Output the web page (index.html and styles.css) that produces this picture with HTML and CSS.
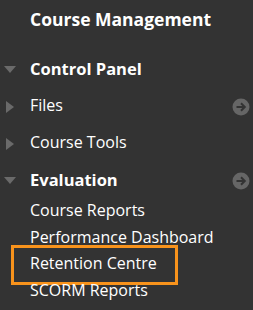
FILE: index.html
```html
<!DOCTYPE html>
<html>
<head>
<meta charset="utf-8">
<link rel="stylesheet" href="styles.css">
</head>
<body>
<nav class="menu">
  <h2 class="title">Course Management</h2>
  <ul class="sections">
    <li class="section open bold">
      <span class="tri down"></span><span class="label">Control Panel</span>
    </li>
    <li class="section">
      <span class="tri right"></span><span class="label">Files</span>
      <span class="go"><svg viewBox="0 0 18 18" width="18" height="18"><circle cx="9" cy="9" r="8.5" fill="#666"/><path d="M4.5 9h8M9 5.2l3.8 3.8-3.8 3.8" fill="none" stroke="#333" stroke-width="2"/></svg></span>
    </li>
    <li class="section">
      <span class="tri right"></span><span class="label">Course Tools</span>
    </li>
    <li class="section open bold">
      <span class="tri down"></span><span class="label">Evaluation</span>
      <span class="go"><svg viewBox="0 0 18 18" width="18" height="18"><circle cx="9" cy="9" r="8.5" fill="#666"/><path d="M4.5 9h8M9 5.2l3.8 3.8-3.8 3.8" fill="none" stroke="#333" stroke-width="2"/></svg></span>
    </li>
  </ul>
  <ul class="subs">
    <li class="sub">Course Reports</li>
    <li class="sub">Performance Dashboard</li>
    <li class="sub highlight">Retention Centre</li>
    <li class="sub">SCORM Reports</li>
  </ul>
</nav>
</body>
</html>
```
FILE: styles.css
```css
html, body {
  margin: 0;
  padding: 0;
  background: #333333;
}
body {
  font-family: "Open Sans", "DejaVu Sans", sans-serif;
  color: #ffffff;
  width: 253px;
  height: 310px;
  overflow: hidden;
}
.menu {
  padding-top: 9px;
}
.title {
  margin: 0 0 20px 30px;
  font-size: 17.5px;
  line-height: 21px;
  font-weight: 700;
}
.sections, .subs {
  list-style: none;
  margin: 0;
  padding: 0;
}
.section {
  display: flex;
  align-items: center;
  height: 37px;
  font-size: 16px;
  line-height: 37px;
  position: relative;
}
.section.bold {
  font-size: 16.5px;
  font-weight: 700;
}
.tri {
  width: 30px;
  height: 37px;
  display: flex;
  align-items: center;
  flex: none;
}
.tri::before {
  content: "";
  display: block;
  width: 0;
  height: 0;
}
.tri.down::before {
  margin-left: 4px;
  margin-top: 2px;
  border-left: 6.5px solid transparent;
  border-right: 6.5px solid transparent;
  border-top: 7px solid #6a6a6a;
}
.tri.right::before {
  margin-left: 6px;
  margin-top: 2px;
  border-top: 6px solid transparent;
  border-bottom: 6px solid transparent;
  border-left: 8px solid #6a6a6a;
}
.label {
  flex: 1;
}
.go {
  display: flex;
  margin-right: 3px;
  margin-top: 3px;
}
.subs {
  margin-top: -1px;
}
.sub {
  padding-left: 30px;
  font-size: 16px;
  line-height: 26.7px;
  position: relative;
}
.highlight::after {
  content: "";
  position: absolute;
  left: 11px;
  top: -5px;
  width: 161px;
  height: 34px;
  border: 3.5px solid #f8931c;
}
```
